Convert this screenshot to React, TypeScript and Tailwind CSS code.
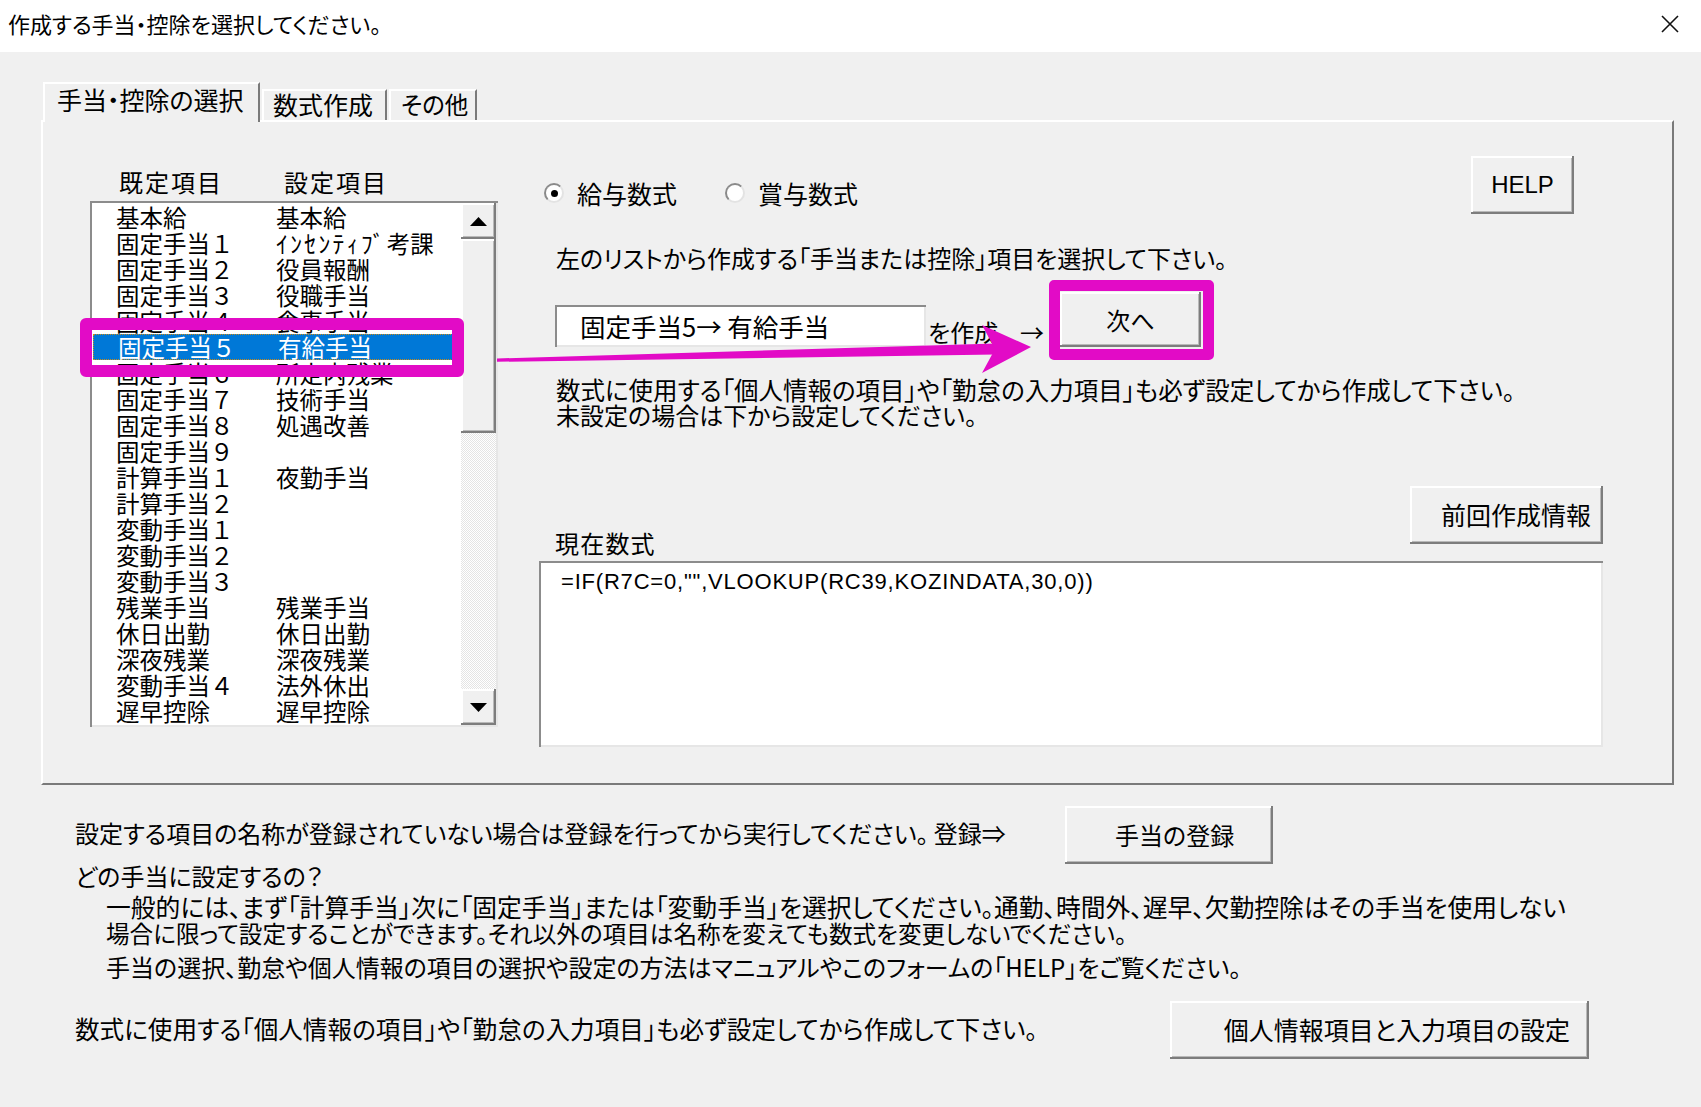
import React from "react";

const ROWS: [string, React.ReactNode][] = [
  ["基本給", "基本給"],
  ["固定手当１", <><span className="tracking-[2.4px]">ｲﾝｾﾝﾃｨﾌﾞ</span>考課</>],
  ["固定手当２", "役員報酬"],
  ["固定手当３", "役職手当"],
  ["固定手当４", "食事手当"],
  ["固定手当５", "有給手当"],
  ["固定手当６", "所定内残業"],
  ["固定手当７", "技術手当"],
  ["固定手当８", "処遇改善"],
  ["固定手当９", ""],
  ["計算手当１", "夜勤手当"],
  ["計算手当２", ""],
  ["変動手当１", ""],
  ["変動手当２", ""],
  ["変動手当３", ""],
  ["残業手当", "残業手当"],
  ["休日出勤", "休日出勤"],
  ["深夜残業", "深夜残業"],
  ["変動手当４", "法外休出"],
  ["遅早控除", "遅早控除"],
];

const SELECTED = 5;

// classic 3D edges
const raised =
  "bg-[#f0f0f0] shadow-[inset_-2px_-2px_0_#7d7d7d,inset_2px_2px_0_#ffffff,inset_-3px_-3px_0_#b9b9b9]";
const sunken = "bg-white shadow-[inset_2px_2px_0_#8c8c8c,inset_-2px_-2px_0_#e6e6e6]";

function Radio({ checked }: { checked?: boolean }) {
  return (
    <span className="flex h-[20px] w-[20px] items-center justify-center rounded-full border-2 border-t-[#8a8a8a] border-l-[#8a8a8a] border-r-[#e3e3e3] border-b-[#e3e3e3] bg-white">
      {checked && <span className="h-[7px] w-[7px] rounded-full bg-black" />}
    </span>
  );
}

function Arrow({ up }: { up?: boolean }) {
  return (
    <svg width="17" height="9" viewBox="0 0 17 9">
      <polygon points={up ? "0,9 8.5,0 17,9" : "0,0 8.5,9 17,0"} fill="#000" />
    </svg>
  );
}

function ListBox() {
  return (
    <div className={`flex h-[526px] w-[408px] p-[2px] ${sunken}`}>
      <div className="flex-1 overflow-hidden pt-px [font-feature-settings:normal]">
        {ROWS.map(([a, b], i) => (
          <div
            key={i}
            className={`flex h-[26px] items-center pl-[24px] text-[23.5px] leading-[26px] whitespace-nowrap ${
              i === SELECTED ? "mr-[8px] ml-px border border-dotted border-[#c98a1a] bg-[#0078d7] pl-[23px] text-white" : ""
            }`}
          >
            <span className="w-[160px]">{a}</span>
            <span>{b}</span>
          </div>
        ))}
      </div>
      <div className="flex w-[35px] flex-col">
        <div className={`flex h-[36px] items-center justify-center ${raised}`}>
          <Arrow up />
        </div>
        <div className={`h-[194px] ${raised}`} />
        <div className="flex-1 bg-[image:repeating-conic-gradient(#ffffff_0%_25%,#e4e4e4_0%_50%)] bg-[length:2px_2px]" />
        <div className={`flex h-[36px] items-center justify-center ${raised}`}>
          <Arrow />
        </div>
      </div>
    </div>
  );
}

export default function App() {
  return (
    <div className="relative h-[1107px] w-[1701px] overflow-hidden bg-[#f0f0f0] font-['Noto_Sans_CJK_JP',sans-serif] text-black [font-feature-settings:'palt']">
      {/* title bar */}
      <div className="flex h-[52px] items-center justify-between bg-white pl-[8px] pr-[22px]">
        <span className="mt-[-6px] text-[22px] leading-[30px]">作成する手当・控除を選択してください。</span>
        <svg width="18" height="18" viewBox="0 0 18 18" className="mt-[-4px]">
          <path d="M1 1L17 17M17 1L1 17" stroke="#111" strokeWidth="1.6" />
        </svg>
      </div>

      <div className="pl-[41px] pt-[30px]">
        {/* tabs */}
        <div className="flex h-[38px] items-end gap-[2px] pl-[2px]">
          <div className="relative z-10 -mb-[2px] h-[40px] w-[217px] border-t-2 border-l-2 border-r-2 border-t-white border-l-white border-r-[#7a7a7a] bg-[#f0f0f0] pl-[12px] text-[25px] leading-[30px]">
            手当・控除の選択
          </div>
          <div className="h-[31px] w-[125px] border-t-2 border-l-2 border-r-2 border-t-white border-l-white border-r-[#7a7a7a] pl-[9px] text-[25px] leading-[26px]">
            数式作成
          </div>
          <div className="h-[31px] w-[88px] border-t-2 border-l-2 border-r-2 border-t-white border-l-white border-r-[#7a7a7a] pl-[10px] text-[23.5px] leading-[26px]">
            その他
          </div>
        </div>

        {/* tab panel */}
        <div className="flex h-[665px] w-[1633px] border-2 border-t-white border-l-white border-r-[#7a7a7a] border-b-[#7a7a7a]">
          {/* left: list */}
          <div className="w-[496px] shrink-0 pl-[47px] pt-[47px]">
            <div className="flex h-[26px] text-[24px] leading-[26px] tracking-[2px]">
              <span className="ml-[29px] w-[165px]">既定項目</span>
              <span>設定項目</span>
            </div>
            <div className="mt-[6px]">
              <ListBox />
            </div>
          </div>

          {/* right */}
          <div className="flex w-[1065px] flex-col text-[24px]">
            <div className="mt-[34px] flex h-[58px] items-start">
              <div className="ml-[5px] mt-[23px] flex h-[28px] items-center">
                <label className="flex w-[181px] items-center">
                  <Radio checked />
                  <span className="ml-[13px] text-[25px] leading-[28px]">給与数式</span>
                </label>
                <label className="flex items-center">
                  <Radio />
                  <span className="ml-[13px] text-[25px] leading-[28px]">賞与数式</span>
                </label>
              </div>
              <button className={`ml-auto mr-[30px] h-[58px] w-[103px] font-['Liberation_Sans',sans-serif] text-[24px] ${raised}`}>
                HELP
              </button>
            </div>

            <p className="mt-[29px] pl-[17px] leading-[30px]">
              左のリストから作成する「手当または控除」項目を選択して下さい。
            </p>

            <div className="mt-[19px] flex h-[55px] items-end">
              <div className={`ml-[16px] flex h-[42px] w-[371px] items-center pl-[25px] text-[25.5px] leading-[30px] ${sunken}`}>
                固定手当5→ 有給手当
              </div>
              <span className="ml-[2px] w-[92px] leading-[30px]">を作成</span>
              <span className="w-[40px] leading-[30px]">→</span>
              <button className={`h-[55px] w-[141px] text-[24px] ${raised}`}>次へ</button>
            </div>

            <div className="mt-[30px] pl-[17px] leading-[25px]">
              <p className="text-[24.5px]">数式に使用する「個人情報の項目」や「勤怠の入力項目」も必ず設定してから作成して下さい。</p>
              <p>未設定の場合は下から設定してください。</p>
            </div>

            <div className="mt-[59px] flex h-[71px] items-end justify-between">
              <span className="pl-[16px] leading-[28px] tracking-[1.2px]">現在数式</span>
              <button className={`mr-px flex h-[58px] w-[193px] items-center justify-end self-start pr-[12px] text-[25px] ${raised}`}>
                前回作成情報
              </button>
            </div>

            <div className={`mt-[4px] h-[186px] w-[1064px] pl-[22px] pt-0 ${sunken}`}>
              <span className="font-['Liberation_Sans',sans-serif] text-[22px] leading-[30px] tracking-[0.8px]">
                =IF(R7C=0,&quot;&quot;,VLOOKUP(RC39,KOZINDATA,30,0))
              </span>
            </div>
          </div>
        </div>
      </div>

      {/* below the panel */}
      <div className="pl-[75px] text-[24px]">
        <div className="mt-[21px] flex h-[58px] items-center">
          <span className="mt-[-4px] w-[990px] leading-[30px]">
            設定する項目の名称が登録されていない場合は登録を行ってから実行してください。 登録⇒
          </span>
          <button className={`flex h-[58px] w-[208px] items-center pl-[50px] text-[24px] ${raised}`}>手当の登録</button>
        </div>
        <p className="mt-[-1px] leading-[26px]">どの手当に設定するの？</p>
        <div className="mt-[4px] pl-[31px] leading-[27px]">
          <p className="text-[24.8px]">
            一般的には、まず「計算手当」次に「固定手当」または「変動手当」を選択してください。通勤、時間外、遅早、欠勤控除はその手当を使用しない
          </p>
          <p className="text-[23.6px]">場合に限って設定することができます。それ以外の項目は名称を変えても数式を変更しないでください。</p>
        </div>
        <p className="mt-[6px] pl-[31px] leading-[27px]">
          手当の選択、勤怠や個人情報の項目の選択や設定の方法はマニュアルやこのフォームの「HELP」をご覧ください。
        </p>
        <div className="mt-[21px] flex h-[58px] items-center">
          <span className="mt-[-4px] w-[1095px] text-[24.6px] leading-[30px]">
            数式に使用する「個人情報の項目」や「勤怠の入力項目」も必ず設定してから作成して下さい。
          </span>
          <button className={`flex h-[58px] w-[419px] items-center justify-end pr-[19px] text-[25px] ${raised}`}>
            個人情報項目と入力項目の設定
          </button>
        </div>
      </div>

      {/* magenta annotation over the form */}
      <div className="pointer-events-none absolute left-[80px] top-[318px] h-[59px] w-[384px] rounded-[6px] border-[12px] border-[#e20bc6]" />
      <div className="pointer-events-none absolute left-[1049px] top-[280px] h-[80px] w-[165px] rounded-[5px] border-[11px] border-[#e20bc6]" />
      <svg className="pointer-events-none absolute left-0 top-0" width="1701" height="1107" viewBox="0 0 1701 1107">
        <polygon points="497,358.5 996,343.5 996,354.5 497,361.8" fill="#e20bc6" />
        <polygon points="982,325 1031,347 982,373 995,349" fill="#e20bc6" />
      </svg>
    </div>
  );
}
